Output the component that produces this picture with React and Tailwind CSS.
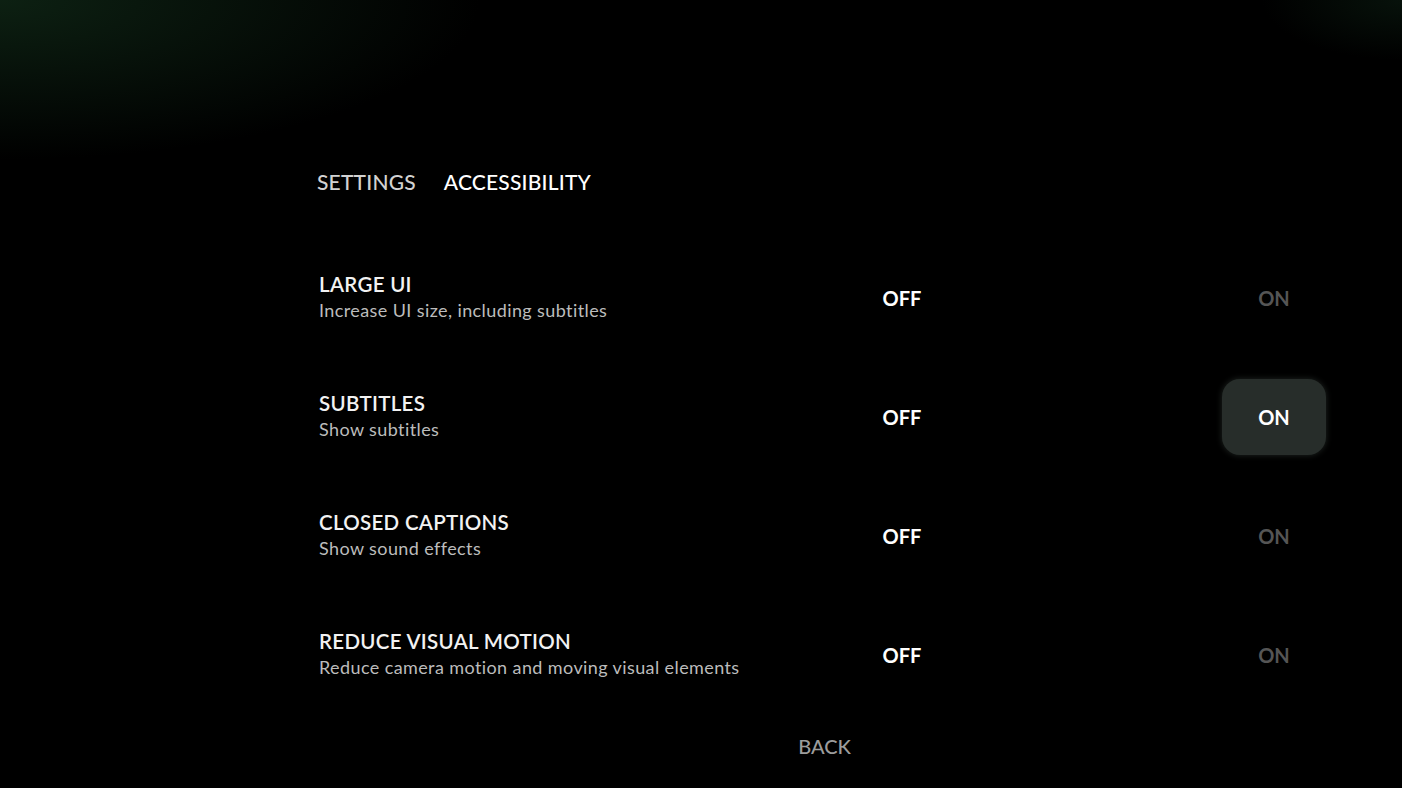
const options = [
  { title: 'LARGE UI', desc: 'Increase UI size, including subtitles', on: false },
  { title: 'SUBTITLES', desc: 'Show subtitles', on: true, focused: true },
  { title: 'CLOSED CAPTIONS', desc: 'Show sound effects', on: false },
  { title: 'REDUCE VISUAL MOTION', desc: 'Reduce camera motion and moving visual elements', on: false },
]

function OptionRow({ option }) {
  return (
    <div className="flex items-center h-[119px]">
      <div className="w-[523px] flex flex-col -mt-[2px]">
        <span className="text-[20.5px] leading-[26px] font-semibold text-[#f2f2f2] tracking-[0.3px]">
          {option.title}
        </span>
        <span className="text-[18px] leading-[26px] text-[#bcbcbc] tracking-[0.4px]">{option.desc}</span>
      </div>
      <div className="w-[120px] text-center text-[20px] font-bold text-white">OFF</div>
      <div className="flex-1" />
      <div
        className={
          option.focused
            ? 'w-[104px] h-[76px] rounded-[18px] bg-[#272d2a] flex items-center justify-center text-[20px] font-bold text-white shadow-[0_0_6px_rgba(40,48,44,0.8)]'
            : 'w-[104px] h-[76px] flex items-center justify-center text-[20px] font-bold text-[#555555]'
        }
      >
        ON
      </div>
    </div>
  )
}

export default function App() {
  return (
    <div className="relative w-full h-[788px] bg-black overflow-hidden font-['Lato','Liberation_Sans',sans-serif]">
      {/* faint green glow in the top corners */}
      <div className="absolute inset-0 pointer-events-none bg-[radial-gradient(ellipse_480px_160px_at_0%_0%,rgba(18,46,26,0.7),rgba(0,0,0,0)_100%),radial-gradient(ellipse_140px_60px_at_100%_0%,rgba(12,30,18,0.6),rgba(0,0,0,0)_100%)]" />

      <div className="relative ml-[317px] w-[1009px] pt-[168px] flex flex-col">
        <nav className="flex items-center gap-[28px] h-[28px] text-[21px] font-medium tracking-[0.2px]">
          <span className="text-[#d2d2d2]">SETTINGS</span>
          <span className="text-white">ACCESSIBILITY</span>
        </nav>

        <div className="mt-[42px] pl-[2px] flex flex-col">
          {options.map((option) => (
            <OptionRow key={option.title} option={option} />
          ))}
        </div>

        <div className="mt-[20px] flex justify-center pl-[6px]">
          <span className="text-[20px] leading-[24px] font-medium text-[#9c9c9c]">BACK</span>
        </div>
      </div>
    </div>
  )
}
